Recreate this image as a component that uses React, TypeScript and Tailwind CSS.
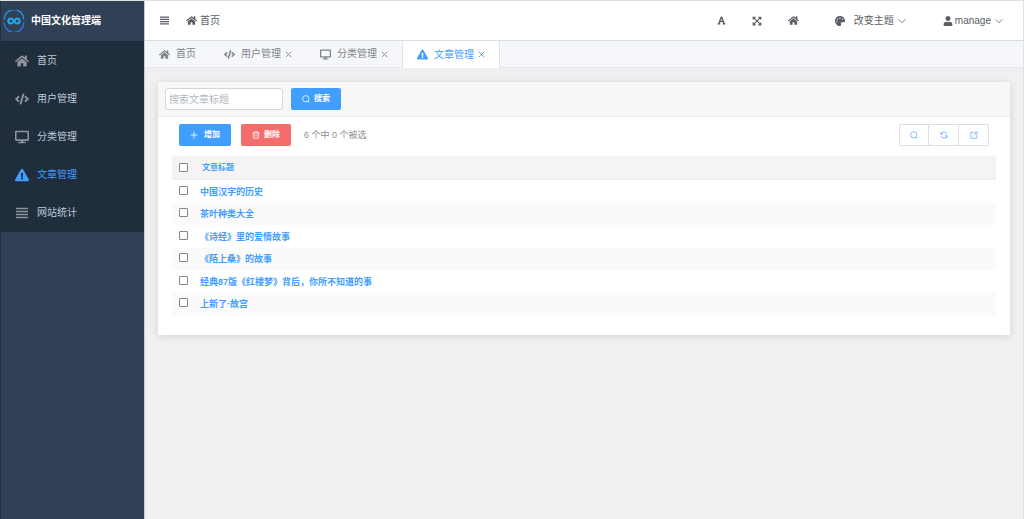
import React, { useState } from "react";
import {
  FaCode,
  FaDesktop,
  FaExclamationTriangle,
  FaExpandArrowsAlt,
  FaFont,
  FaHome,
  FaPalette,
  FaUser,
} from "react-icons/fa";

type IconProps = {
  className?: string;
  children?: React.ReactNode;
};

type Article = {
  id: number;
  title: string;
};

const articles: Article[] = [
  { id: 1, title: "中国汉字的历史" },
  { id: 2, title: "茶叶种类大全" },
  { id: 3, title: "《诗经》里的爱情故事" },
  { id: 4, title: "《陌上桑》的故事" },
  { id: 5, title: "经典87版《红楼梦》背后，你所不知道的事" },
  { id: 6, title: "上新了·故宫" },
];

// Thin line icons
const LineIcon: React.FC<IconProps> = ({ className, children }: IconProps) => (
  <svg
    viewBox="0 0 16 16"
    fill="none"
    stroke="currentColor"
    strokeWidth="1.6"
    className={className}
    aria-hidden="true"
  >
    {children}
  </svg>
);

const BarsIcon = ({ className }: IconProps) => (
  <LineIcon className={className}>
    <path d="M0 2h16M0 6h16M0 10h16M0 14h16" strokeWidth="1.8" />
  </LineIcon>
);

const SearchIcon = ({ className }: IconProps) => (
  <LineIcon className={className}>
    <circle cx="7.5" cy="7.5" r="6.3" />
    <path d="M12 12l3 3" />
  </LineIcon>
);

const RefreshIcon = ({ className }: IconProps) => (
  <LineIcon className={className}>
    <path d="M2 6.5A6.3 6.3 0 0 1 14 6M14 9.5A6.3 6.3 0 0 1 2 10" />
    <path d="M2 2v4.5h4M14 14V9.5h-4" />
  </LineIcon>
);

const ExportIcon = ({ className }: IconProps) => (
  <LineIcon className={className}>
    <path d="M9 2.5H1.7v12h12V8" />
    <circle cx="12.8" cy="3.5" r="2" />
    <path d="M11.4 5L8 8.4" />
  </LineIcon>
);

const DeleteIcon = ({ className }: IconProps) => (
  <LineIcon className={className}>
    <path d="M1 4h14M5 4V1.5h6V4M2.7 4v10.5h10.6V4M6.3 7v4.5M9.7 7v4.5" />
  </LineIcon>
);

const PlusIcon = ({ className }: IconProps) => (
  <LineIcon className={className}>
    <path d="M8 1v14M1 8h14" />
  </LineIcon>
);

const CloseIcon = ({ className }: IconProps) => (
  <LineIcon className={className}>
    <path d="M2 2l12 12M14 2L2 14" strokeWidth="2" />
  </LineIcon>
);

const ArrowIcon = ({ className }: IconProps) => (
  <LineIcon className={className}>
    <path d="M1 4.5l7 7 7-7" />
  </LineIcon>
);

const Logo = () => (
  <svg viewBox="0 0 22 22" fill="none" className="size-[22px]" aria-hidden="true">
    <path d="M1.2 9.5A9.8 9.8 0 0 1 20.8 9.5" stroke="#1f9be8" strokeWidth="1.3" />
    <path d="M1.2 12.5A9.8 9.8 0 0 0 20.8 12.5" stroke="#2b78e4" strokeWidth="1.3" />
    <path
      d="M11 11C9.8 9.2 9 8.5 7.9 8.5a2.5 2.5 0 0 0 0 5c1.1 0 1.9-.7 3.1-2.5s2-2.5 3.1-2.5a2.5 2.5 0 0 1 0 5c-1.1 0-1.900-.7-3.100-2.500z"
      stroke="#1ea5f0"
      strokeWidth="2.2"
    />
  </svg>
);

const menu = [
  { name: "首页", icon: <FaHome /> },
  { name: "用户管理", icon: <FaCode /> },
  { name: "分类管理", icon: <FaDesktop /> },
  { name: "文章管理", icon: <FaExclamationTriangle /> },
  { name: "网站统计", icon: <BarsIcon className="size-3" /> },
];

const tabs = menu.slice(0, 4);

const Sidebar = () => (
  <aside className="w-[145px] shrink-0 bg-[#304156] border-l border-r border-l-[#26303c] border-r-[#c9cdd3]">
    <div className="h-10 flex items-center gap-[6px] pl-[2px] text-white font-bold">
      <Logo />
      中国文化管理端
    </div>
    <nav className="bg-[#1f2d3d] pt-px">
      {menu.map((item) => (
        <a
          key={item.name}
          href="#"
          className={
            item.name === "文章管理"
              ? "h-[38px] flex items-center pl-[14px] gap-2 text-[#409eff]"
              : "h-[38px] flex items-center pl-[14px] gap-2 text-[#bfcbd9]"
          }
        >
          <span
            className={
              item.name === "文章管理"
                ? "w-[14px] flex justify-center text-[14px]"
                : "w-[14px] flex justify-center text-[14px] text-[#909399]"
            }
          >
            {item.icon}
          </span>
          {item.name}
        </a>
      ))}
    </nav>
  </aside>
);

const Header = () => (
  <header className="h-10 bg-white border-b border-[#d8dce5] flex items-center justify-between pl-[15px] pr-5 text-[#5a5e66]">
    <div className="flex items-center gap-[17px]">
      <button aria-label="菜单">
        <BarsIcon className="size-[9px]" />
      </button>
      <a href="#" className="flex items-center gap-[3px]">
        <FaHome className="text-[11px]" />
        首页
      </a>
    </div>
    <div className="flex items-center">
      <button aria-label="字体" className="mr-[26px]">
        <FaFont className="text-[9px]" />
      </button>
      <button aria-label="全屏" className="mr-[26px]">
        <FaExpandArrowsAlt className="text-[10px]" />
      </button>
      <button aria-label="主页" className="mr-[36px]">
        <FaHome className="text-[11px]" />
      </button>
      <button className="flex items-center mr-[37px]">
        <FaPalette className="text-[10px] mr-[9px]" />
        改变主题
        <ArrowIcon className="size-2 ml-1" />
      </button>
      <button className="flex items-center">
        <FaUser className="text-[10px] mr-[2px]" />
        manage
        <ArrowIcon className="size-2 ml-1" />
      </button>
    </div>
  </header>
);

const Tabs = () => (
  <div className="h-[27px] bg-[#f5f7fa] border-b border-[#e4e7ed] flex text-[#808489]">
    {tabs.map((tab) => (
      <div
        key={tab.name}
        className={
          tab.name === "文章管理"
            ? "h-[27px] flex items-center px-[14px] bg-white border-x border-[#e0e4ec] text-[#409eff]"
            : "flex items-center px-[14px]"
        }
      >
        <a href="#" className="flex items-center gap-[6px]">
          <span className="w-[11px] flex justify-center text-[11px]">
            {tab.icon}
          </span>
          {tab.name}
        </a>
        {tab.name !== "首页" && (
          <button aria-label={`关闭${tab.name}`} className="ml-1">
            <CloseIcon className="size-[7px]" />
          </button>
        )}
      </div>
    ))}
  </div>
);

const App: React.FC = () => {
  const [selected, setSelected] = useState<number[]>([]);

  const toggle = (id: number) => {
    setSelected(
      selected.includes(id)
        ? selected.filter((item) => item !== id)
        : [...selected, id]
    );
  };

  const toggleAll = () => {
    setSelected(
      selected.length === articles.length ? [] : articles.map((a) => a.id)
    );
  };

  return (
    <div className="min-h-screen flex bg-[#f0f0f0] border-t border-t-[#dcdfe3] font-['Liberation_Sans','Noto_Sans_CJK_SC',sans-serif] text-[10px] leading-4">
      <Sidebar />
      <div className="grow min-w-0 border-r border-[#dfe1e5]">
        <Header />
        <Tabs />
        <main className="pt-[14px] px-[13px]">
          <div className="bg-white shadow-[0_1px_8px_rgba(0,0,0,0.12)]">
            <form
              className="h-[35px] bg-[#f7f7f7] border-b border-[#ebebeb] flex items-center gap-2 px-[7px]"
              onSubmit={(e) => e.preventDefault()}
            >
              <input
                type="text"
                aria-label="搜索文章标题"
                placeholder="搜索文章标题"
                className="w-[118px] h-[22px] px-[3px] bg-white border border-[#d4d6da] rounded-[3px] placeholder:text-[#b4b8bf] outline-none"
              />
              <button className="w-[50px] h-[22px] rounded-[2px] bg-[#409eff] text-white text-[8px] font-bold flex items-center justify-center gap-1">
                <SearchIcon className="size-2" />
                搜索
              </button>
            </form>
            <div className="pt-[7px] px-[14px] pb-5">
              <div className="flex items-center justify-between px-[7px] pb-[10px]">
                <div className="flex items-center">
                  <button className="w-[52px] h-[22px] mr-[10px] rounded-[2px] bg-[#409eff] text-white text-[8px] font-bold flex items-center justify-center gap-[6px]">
                    <PlusIcon className="size-2" />
                    增加
                  </button>
                  <button className="w-[50px] h-[22px] mr-[13px] rounded-[2px] bg-[#f56c6c] text-white text-[8px] font-bold flex items-center justify-center gap-1">
                    <DeleteIcon className="size-2" />
                    删除
                  </button>
                  <span className="text-[9px] text-[#8c8c8c]">
                    {articles.length} 个中 {selected.length} 个被选
                  </span>
                </div>
                <div className="h-[22px] flex border border-[#dcdfe6] rounded-[2px] divide-x divide-[#dcdfe6] text-[#69abff]">
                  <button aria-label="搜索" className="w-[29px] flex items-center justify-center">
                    <SearchIcon className="size-2" />
                  </button>
                  <button aria-label="刷新" className="w-[30px] flex items-center justify-center">
                    <RefreshIcon className="size-2" />
                  </button>
                  <button aria-label="导出" className="w-[29px] flex items-center justify-center">
                    <ExportIcon className="size-2" />
                  </button>
                </div>
              </div>
              <table className="w-full text-left text-[#409eff]">
                <thead>
                  <tr className="h-6 bg-[#f4f4f4] shadow-[inset_0_-1px_0_#ebebeb]">
                    <th className="w-7 p-0 pl-[7px] pb-[2px]">
                      <input
                        type="checkbox"
                        aria-label="全选"
                        className="block size-[9px] appearance-none bg-white checked:bg-[#409eff] border border-[#858585] rounded-[1px]"
                        checked={selected.length === articles.length}
                        onChange={toggleAll}
                      />
                    </th>
                    <th className="p-0 pl-[2px] text-[8px] font-bold">文章标题</th>
                  </tr>
                </thead>
                <tbody>
                  {articles.map((article) => (
                    <tr
                      key={article.id}
                      className="odd:h-[23px] even:h-[22px] even:bg-[#fafafa]"
                    >
                      <td className="p-0 pl-[7px] pb-[3px]">
                        <input
                          id={`article-${article.id}`}
                          type="checkbox"
                          className="block size-[9px] appearance-none bg-white checked:bg-[#409eff] border border-[#858585] rounded-[1px]"
                          checked={selected.includes(article.id)}
                          onChange={() => toggle(article.id)}
                        />
                      </td>
                      <td className="p-0 text-[9px] font-bold">
                        <label htmlFor={`article-${article.id}`}>
                          {article.title}
                        </label>
                      </td>
                    </tr>
                  ))}
                </tbody>
              </table>
            </div>
          </div>
        </main>
      </div>
    </div>
  );
};

export default App;
